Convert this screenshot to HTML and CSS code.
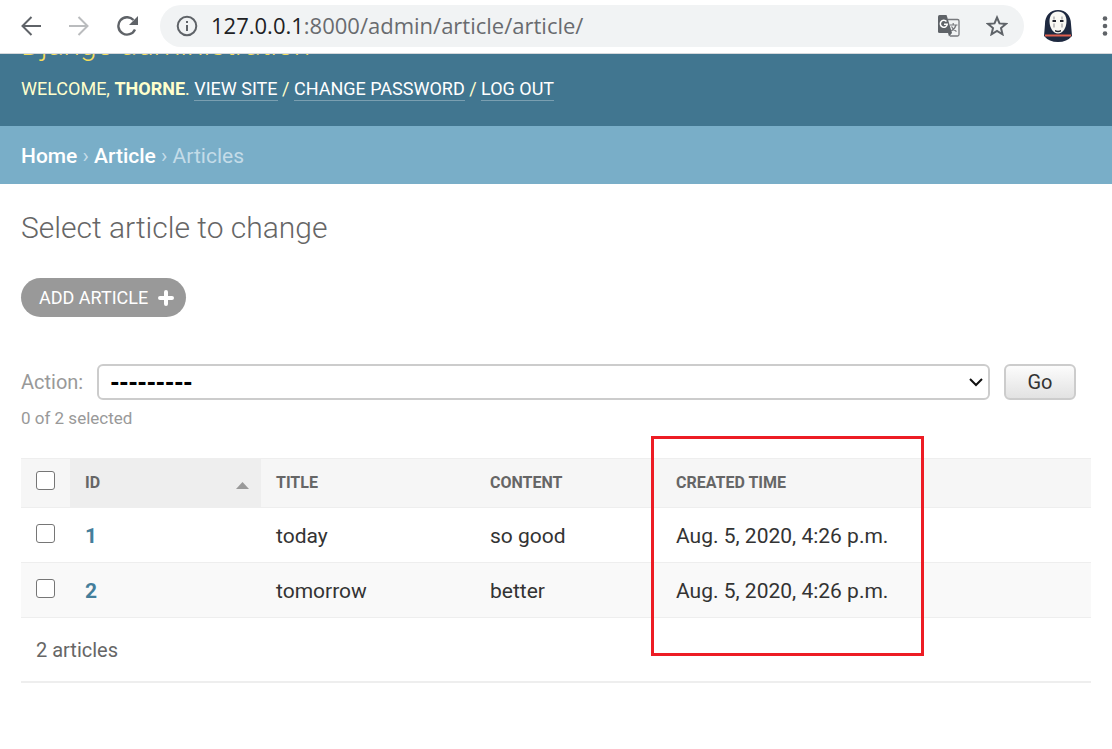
FILE: index.html
```html
<!DOCTYPE html>
<html lang="en">
<head>
<meta charset="utf-8">
<title>Select article to change | Django site admin</title>
<link rel="stylesheet" href="styles.css">
</head>
<body>
<div class="toolbar">
  <button class="tool" type="button" aria-label="Back">
    <svg width="20" height="20" viewBox="0 0 20 20" fill="none" stroke="#5f6368" stroke-width="2"><path d="M20 10H2M10.500 1L1.500 10l9 9"/></svg>
  </button>
  <button class="tool" type="button" aria-label="Forward">
    <svg width="20" height="20" viewBox="0 0 20 20" fill="none" stroke="#babcbe" stroke-width="2"><path d="M0 10h18M9.500 1l9 9-9 9"/></svg>
  </button>
  <button class="tool" type="button" aria-label="Reload">
    <svg width="22" height="20" viewBox="0 0 22 20"><path d="M18 13.500A8.700 8.700 0 1 1 16.500 4" fill="none" stroke="#5f6368" stroke-width="2.400"/><path d="M21 0v9h-9z" fill="#5f6368"/></svg>
  </button>
  <div class="address">
    <svg width="22" height="22" viewBox="0 0 22 22"><circle cx="11" cy="11" r="9.300" fill="none" stroke="#5f6368" stroke-width="2"/><path d="M10 10h2v6h-2zM10 6h2v2h-2z" fill="#5f6368"/></svg>
    <div class="url" role="textbox" aria-label="Address"><span class="host">127.0.0.1</span>:8000/admin/article/article/</div>
    <button class="tool" type="button" aria-label="Translate this page">
      <svg width="22" height="22" viewBox="0 0 22 22" fill="none"><path d="M10 4.500h9.500q1.500 0 1.500 1.500v13.500q0 1.500-1.500 1.500H12" stroke="#77797d" stroke-width="1.300"/><path d="M1.500 0H8.500l1 3 4.500 15H1.500Q0 18 0 16.500V1.500Q0 0 1.500 0z" fill="#5f6368"/><path d="M10 18h4l-3 3.500z" fill="#5f6368"/><path d="M8.500 6.500A3.500 3.500 0 1 0 9.300 9.200H6" stroke="#fff" stroke-width="1.500"/><path d="M12 10h7.500M15.200 8v2M18 10q-1 4-5 6M13.500 11.500q1.500 3 5 5" stroke="#77797d" stroke-width="1.200"/></svg>
    </button>
    <button class="tool" type="button" aria-label="Bookmark this page">
      <svg width="22" height="21" viewBox="0 0 22 21"><path d="M11 2.500l2.500 5.900 6.400.500-4.900 4.200 1.500 6.200L11 16l-5.500 3.300L7 13.100 2.100 8.900l6.400-.500z" fill="none" stroke="#5f6368" stroke-width="2"/></svg>
    </button>
  </div>
  <button class="tool profile" type="button" aria-label="Profile">
    <svg width="28" height="32" viewBox="0 0 28 32"><path d="M14 0C6 0 1 6 1 14L0 26q5 6 14 6t14-6l-1-12C27 6 22 0 14 0z" fill="#1e2940"/><path d="M1 25.500h26" stroke="#e0604f" stroke-width="2"/><path d="M14 1.500c-5.500 0-8.500 4-8.500 9.500 0 6.500 3.500 12.500 8.500 12.500s8.500-6 8.500-12.500c0-5.500-3-9.500-8.500-9.500z" fill="#f8f8f3"/><path d="M8.500 11h3.500M16 11h3.500" stroke="#20242e" stroke-width="2"/><path d="M10 6.500v3M18 6.500v3M10 13.500v4M18 13.500v4" stroke="#8b8b90" stroke-width="1"/><path d="M11 20q3 1.500 6 0v1.500q-3 1.500-6 0z" fill="#20242e"/></svg>
  </button>
  <button class="tool" type="button" aria-label="Menu">
    <svg width="6" height="20" viewBox="0 0 6 20" fill="#5f6368"><circle cx="3" cy="2.500" r="2.300"/><circle cx="3" cy="10" r="2.300"/><circle cx="3" cy="17.500" r="2.300"/></svg>
  </button>
</div>

<header class="header">
  <div class="site-name">Django administration</div>
  <div class="user-tools">Welcome, <strong>Thorne</strong>. <a href="#">View site</a> / <a href="#">Change password</a> / <a href="#">Log out</a></div>
</header>

<nav class="breadcrumbs" aria-label="Breadcrumbs"><a href="#">Home</a> › <a href="#">Article</a> › Articles</nav>

<main class="content">
  <h1 class="title">Select article to change</h1>
  <a class="add-link" href="#">Add article
    <svg width="16" height="16" viewBox="0 0 16 16"><path d="M8 2v12M2 8h12" stroke="#fff" stroke-width="4" stroke-linecap="round"/></svg>
  </a>

  <form class="changelist">
    <div class="actions">
      <label for="action">Action:</label>
      <div class="select-wrap">
        <select class="action-select" id="action"><option>---------</option></select>
        <svg class="chevron" width="14" height="9" viewBox="0 0 14 9"><path d="M1 1l6 6 6-6" fill="none" stroke="#111" stroke-width="2"/></svg>
      </div>
      <button class="go" type="submit">Go</button>
    </div>
    <div class="counter">0 of 2 selected</div>

    <div class="results">
      <table class="result-list">
        <thead>
          <tr>
            <th class="col-check"><input class="check" type="checkbox" aria-label="Select all"></th>
            <th class="col-id"><div class="sorted">ID <svg width="13" height="7" viewBox="0 0 13 7"><path d="M0 7l6.500-7L13 7z" fill="#999"/></svg></div></th>
            <th class="col-title">Title</th>
            <th class="col-content">Content</th>
            <th>Created time</th>
          </tr>
        </thead>
        <tbody>
          <tr>
            <td><input class="check" type="checkbox" aria-label="Select article 1"></td>
            <td><a class="row-link" href="#">1</a></td>
            <td>today</td>
            <td>so good</td>
            <td>Aug. 5, 2020, 4:26 p.m.</td>
          </tr>
          <tr>
            <td><input class="check" type="checkbox" aria-label="Select article 2"></td>
            <td><a class="row-link" href="#">2</a></td>
            <td>tomorrow</td>
            <td>better</td>
            <td>Aug. 5, 2020, 4:26 p.m.</td>
          </tr>
        </tbody>
      </table>
      <div class="highlight"></div>
    </div>
    <p class="paginator">2 articles</p>
  </form>
</main>
</body>
</html>
```

FILE: styles.css
```css
* {
  box-sizing: border-box;
}

body {
  margin: 0;
  background: #fff;
  color: #333;
  font-family: Roboto, "Liberation Sans", sans-serif;
  font-size: 20px;
  line-height: 24px;
}

button {
  font: inherit;
}

.toolbar {
  display: flex;
  align-items: center;
  height: 54px;
  padding: 0 4px 2px 21px;
  border-bottom: 1px solid #d5d8dc;
  gap: 28px;
}

.tool {
  display: flex;
  flex: none;
  padding: 0;
  border: 0;
  background: none;
}

.profile {
  margin-right: 2px;
}

.address {
  display: flex;
  flex: 1;
  align-items: center;
  height: 42px;
  margin: 0 -8px 0 -7px;
  padding: 0 16px;
  border-radius: 21px;
  background: #f1f3f4;
  gap: 26px;
}

.url {
  flex: 1;
  margin-left: -13px;
  padding-bottom: 2px;
  color: #696b6f;
  font-family: "Open Sans", "Noto Sans", sans-serif;
  font-size: 22px;
  white-space: nowrap;
}

.host {
  color: #202124;
}

.header {
  display: flex;
  flex-direction: column;
  justify-content: flex-end;
  height: 72px;
  padding: 0 21px 25px;
  background: #417690;
  color: #ffc;
  overflow: hidden;
}

.site-name {
  margin-bottom: 14px;
  color: #f5dd5d;
  font-size: 30px;
  font-weight: 300;
  line-height: 36px;
}

.user-tools {
  font-size: 18px;
  line-height: 24px;
  text-transform: uppercase;
}

.user-tools a {
  padding-bottom: 1px;
  border-bottom: 1px solid #7a9fb1;
  color: #fff;
  text-decoration: none;
}

.breadcrumbs {
  padding: 18px 21px 16px;
  background: #79aec8;
  color: #c4dce8;
  font-size: 21px;
}

.breadcrumbs a {
  color: #fff;
  font-weight: 500;
  text-decoration: none;
}

.content {
  padding: 26px 21px;
}

.title {
  margin: 0 0 32px;
  color: #666;
  font-size: 30px;
  font-weight: 300;
  line-height: 36px;
}

.add-link {
  display: inline-flex;
  align-items: center;
  height: 39px;
  padding: 0 12px 0 18px;
  border-radius: 20px;
  background: #999;
  color: #fff;
  font-size: 18px;
  text-decoration: none;
  text-transform: uppercase;
  gap: 10px;
}

.changelist {
  margin-top: 47px;
}

.actions {
  display: flex;
  align-items: center;
  padding-right: 15px;
  color: #999;
  gap: 14px;
}

.select-wrap {
  position: relative;
  flex: 1;
}

.action-select {
  display: block;
  width: 100%;
  height: 36px;
  padding: 0 11px;
  border: 2px solid #ccc;
  border-radius: 6px;
  background: #fff;
  color: #000;
  font-family: "DejaVu Sans", sans-serif;
  font-size: 22px;
  font-weight: 700;
  appearance: none;
}

.chevron {
  position: absolute;
  top: 14px;
  right: 7px;
  pointer-events: none;
}

.go {
  width: 72px;
  height: 36px;
  padding: 0;
  border: 2px solid #ccc;
  border-radius: 6px;
  background: linear-gradient(#fcfcfc, #e2e2e2);
  color: #333;
}

.counter {
  margin: 6px 0 28px;
  color: #999;
  font-size: 17px;
}

.results {
  position: relative;
}

.result-list {
  width: 100%;
  border-collapse: collapse;
  table-layout: fixed;
}

th {
  height: 49px;
  padding: 0 12px 0 15px;
  border: solid #eee;
  border-width: 1px 0;
  background: #f6f6f6;
  color: #666;
  font-size: 16px;
  font-weight: 700;
  text-align: left;
  text-transform: uppercase;
}

td {
  height: 55px;
  padding: 2px 15px 0;
  border-bottom: 1px solid #eee;
  font-size: 21px;
}

tbody tr:nth-child(even) {
  background: #f9f9f9;
}

.col-check {
  width: 49px;
}

.col-id {
  width: 191px;
  background: #eee;
}

.col-title {
  width: 214px;
}

.col-content {
  width: 186px;
}

.sorted {
  display: flex;
  align-items: center;
  justify-content: space-between;
}

.sorted svg {
  margin-top: 4px;
}

.check {
  display: block;
  width: 19px;
  height: 19px;
  margin: 0 0 6px;
  border: 1px solid #767676;
  border-radius: 3px;
  background: #fff;
  appearance: none;
}

.check:checked {
  background: #417690;
}

.row-link {
  color: #447e9b;
  font-weight: 700;
  text-decoration: none;
}

.highlight {
  position: absolute;
  top: -22px;
  left: 630px;
  width: 273px;
  height: 220px;
  border: 3px solid #ed1c24;
  pointer-events: none;
}

.paginator {
  margin: 0;
  padding: 20px 15px 19px;
  border-bottom: 2px solid #eee;
  color: #666;
}
```
